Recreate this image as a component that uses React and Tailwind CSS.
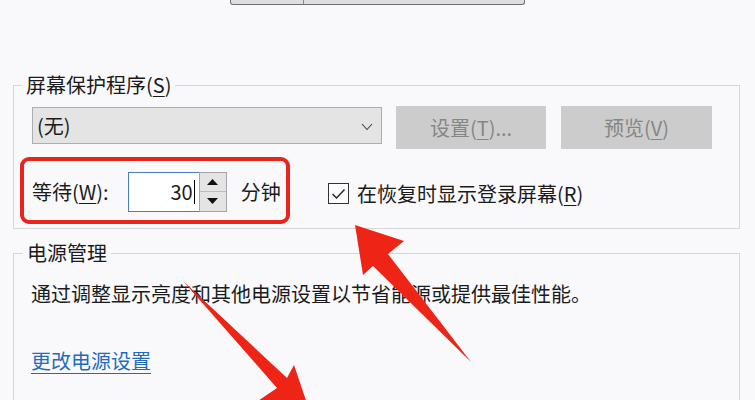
import React from "react";

const U = ({ children }) => <span className="underline underline-offset-[3px] decoration-1">{children}</span>;

export default function App() {
  return (
    <div
      className="relative w-[755px] h-[400px] overflow-hidden bg-[#f9f9fb] text-[#1b1b1b] text-[20px] leading-[26px]"
      style={{ fontFamily: '"Noto Sans CJK SC", "Noto Sans", sans-serif' }}
    >
      {/* bottom of monitor preview */}
      <div className="ml-[230px] w-[295px] h-[5px] flex border border-t-0 border-[#6f6f6f] rounded-b-[3px] bg-[#dedede]">
        <div className="w-[73px] border-r border-[#8a8a8a]" />
      </div>

      <div className="ml-[13px] w-[727px]">
        {/* Screen saver fieldset */}
        <fieldset className="mt-[67px] w-full min-w-0 border border-[#d6d6d6] pl-[18px] pr-[18px] pt-[9px] pb-[4px]">
          <legend className="-ml-[10px] px-[4px] leading-[26px]">
            屏幕保护程序(<U>S</U>)
          </legend>
          <div className="flex items-start">
            <div className="w-[350px] h-[37px] bg-[#e4e4e4] border border-[#adadad] flex items-center justify-between pl-[4px] pr-[8px]">
              <span>(无)</span>
              <svg width="12" height="8" viewBox="0 0 12 8" className="mt-[2px]">
                <polyline points="1,1 6,6.5 11,1" fill="none" stroke="#444" strokeWidth="1.1" />
              </svg>
            </div>
            <div className="ml-[14px] -mt-[1px] w-[150px] h-[43px] bg-[#cccccc] text-[#868686] flex items-center justify-center">
              设置(<U>T</U>)...
            </div>
            <div className="ml-[15px] -mt-[1px] w-[151px] h-[43px] bg-[#cccccc] text-[#868686] flex items-center justify-center">
              预览(<U>V</U>)
            </div>
          </div>

          <div className="flex items-center mt-[8px]">
            <div className="-ml-[12px] w-[270px] h-[67px] border-[4px] border-[#e8251c] rounded-[9px] flex items-center pl-[8px] pt-[2px]">
              <span>等待(<U>W</U>):</span>
              <div className="ml-[19px] flex h-[40px]">
                <div className="w-[71px] h-[40px] border border-r-0 border-[#4a7ebf] bg-white flex items-center justify-end pr-[4px]">
                  <span className="leading-[24px]">30</span>
                  <span className="w-[1px] h-[24px] bg-black ml-[1px]" />
                </div>
                <div className="w-[28px] h-[40px] border border-[#a6a6a6] bg-[#e4e4e4] flex flex-col">
                  <div className="flex-1 flex items-center justify-center border-b border-[#bdbdbd]">
                    <svg width="11" height="6" viewBox="0 0 11 6"><polygon points="5.5,0 11,6 0,6" fill="#111" /></svg>
                  </div>
                  <div className="flex-1 flex items-center justify-center">
                    <svg width="11" height="6" viewBox="0 0 11 6"><polygon points="0,0 11,0 5.5,6" fill="#111" /></svg>
                  </div>
                </div>
              </div>
              <span className="ml-[14px]">分钟</span>
            </div>

            <div className="ml-[38px] mt-[6px] flex items-center">
              <div className="w-[21px] h-[21px] border border-[#333] bg-[#fdfdfd] flex items-center justify-center">
                <svg width="15" height="12" viewBox="0 0 15 12">
                  <polyline points="1.5,6 5.5,10 13.5,1.5" fill="none" stroke="#222" strokeWidth="1.4" />
                </svg>
              </div>
              <span className="ml-[8px]">在恢复时显示登录屏幕(<U>R</U>)</span>
            </div>
          </div>
        </fieldset>

        {/* Power management fieldset */}
        <fieldset className="mt-[11px] w-full min-w-0 h-[300px] border border-[#d6d6d6] pl-[17px] pr-[18px] pt-[15px]">
          <legend className="-ml-[8px] px-[4px] leading-[26px]">电源管理</legend>
          <p>通过调整显示亮度和其他电源设置以节省能源或提供最佳性能。</p>
          <p className="mt-[41px] text-[#1f6cbf] underline underline-offset-[4px] decoration-1">更改电源设置</p>
        </fieldset>
      </div>

      {/* annotation arrows */}
      <svg className="absolute left-0 top-0 pointer-events-none" width="755" height="400" viewBox="0 0 755 400">
        <polygon points="355,225 404,241 388,254 471,362 373,266 363,275" fill="#ee2516" />
        <polygon points="183,281 287,378 294,365 316,430 252,405 277,388" fill="#ee2516" />
      </svg>
    </div>
  );
}
